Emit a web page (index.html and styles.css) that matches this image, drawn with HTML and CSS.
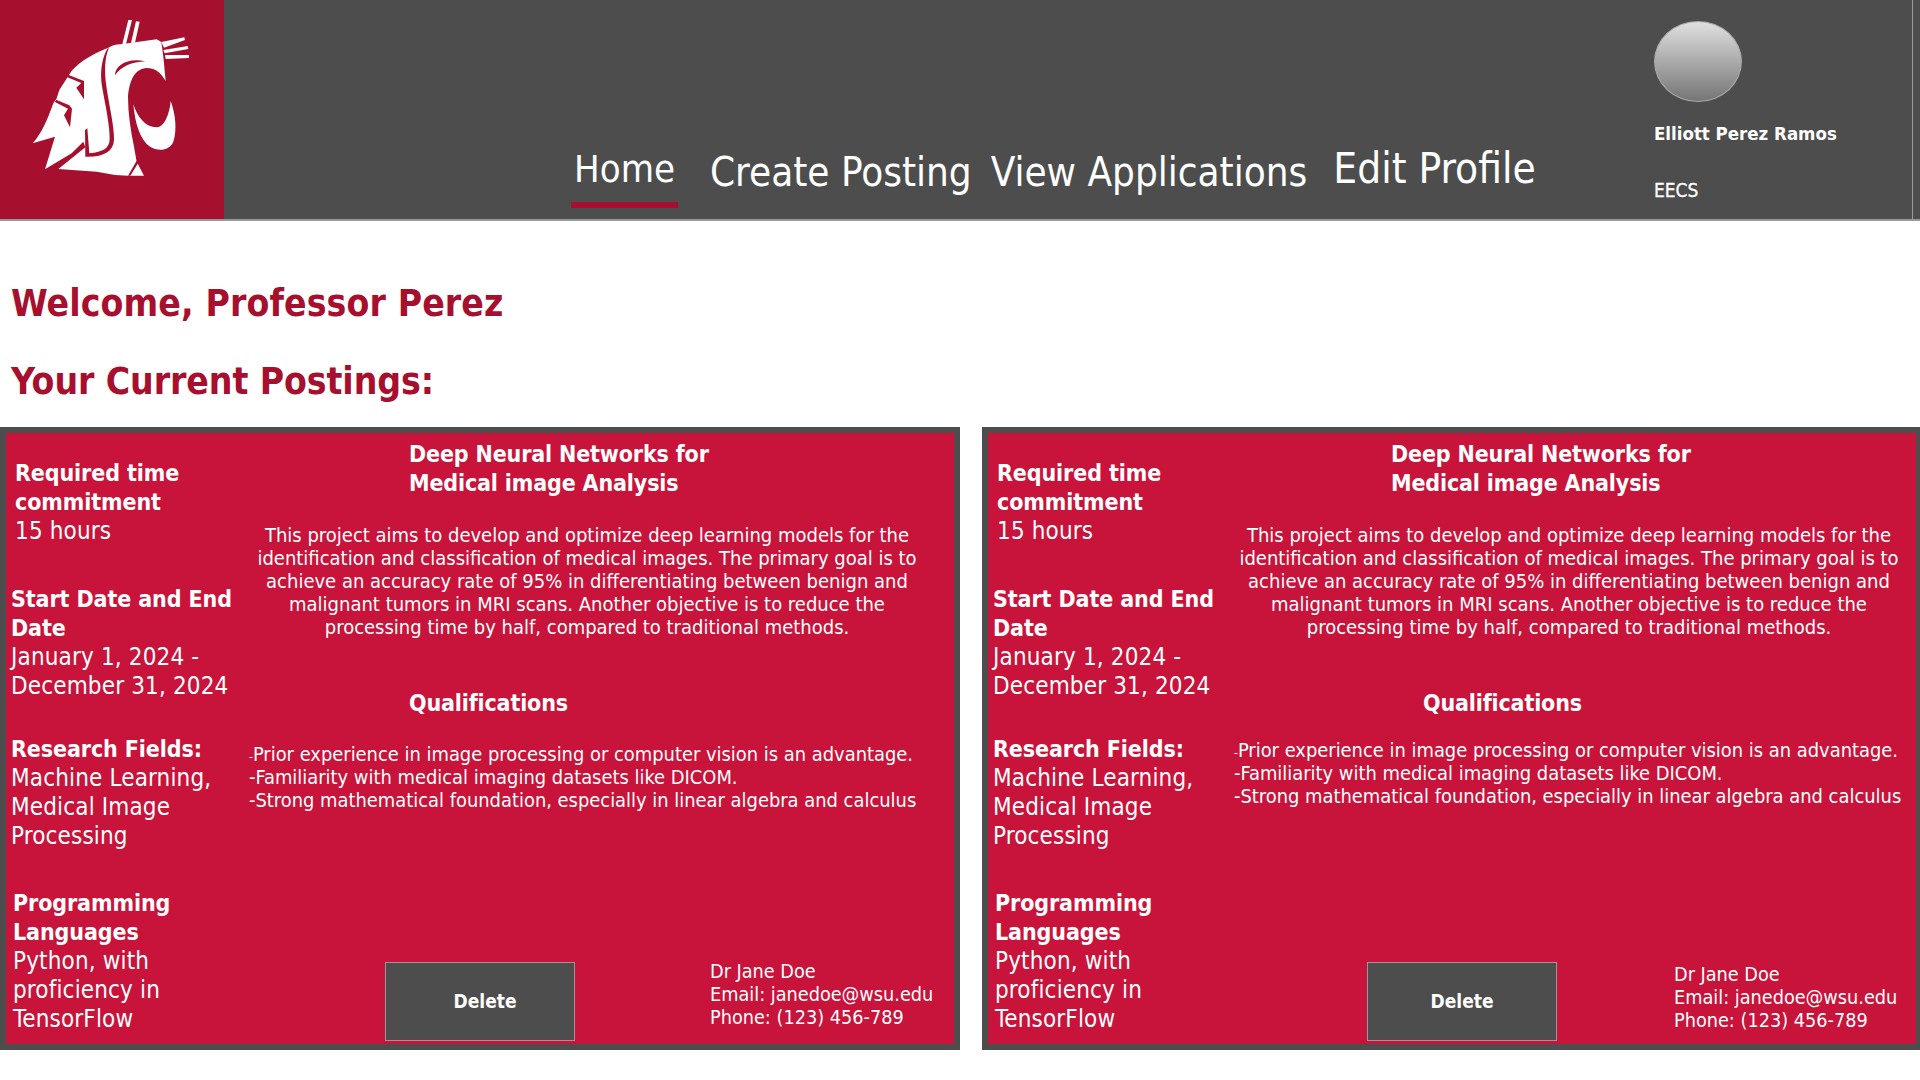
FILE: index.html
```html
<!DOCTYPE html>
<html lang="en">
<head>
<meta charset="utf-8">
<title>Faculty Home</title>
<link rel="stylesheet" href="styles.css">
</head>
<body>
<header class="topbar">
  <div class="logo">
    <svg class="logo-art" viewBox="0 0 672 657" aria-hidden="true">
      <g fill="#fff">
        <path d="M385 60L396 60L378 132L367 132Z"/>
        <path d="M408 64L419 65L405 128L393 128Z"/>
        <path d="M484 126L553 112L555 120L492 143Z"/>
        <path d="M490 150L563 138L565 147L494 160Z"/>
        <path d="M495 165L567 165L567 174L497 177Z"/>
        <path d="M400 313C412 350 435 382 470 382C492 382 508 345 512 303C526 340 532 390 520 425C508 452 475 455 450 440C420 420 405 370 400 313Z"/>
        <path d="M368 132L470 118L484 126L490 170L497 243C480 215 465 205 440 204C405 206 388 240 384 290C384 340 392 390 402 440L410 485L432 527L385 527L345 525L290 515L175 507L256 442L250 425L215 460L135 508L165 410L98 430C125 400 140 365 160 310L170 295L178 270L215 212C245 180 285 158 325 143C340 134 355 132 368 132Z"/>
      </g>
      <g fill="#a60f2d">
        <path d="M324 143C306 172 298 215 307 265C317 320 330 380 329 418C328 445 310 456 268 460L262 385L255 390L256 470C310 472 340 455 342 420C343 380 328 320 320 265C312 215 314 175 326 145Z"/>
        <path d="M204 224L252 243L252 298L229 263L244 249L202 232Z"/>
        <path d="M168 299L208 316L216 326L210 382L192 346L204 326L165 306Z"/>
        <path d="M345 226C345 195 385 172 436 184C395 186 365 198 345 226Z"/>
        <path d="M410 482L416 487L391 527L384 527Z"/>
      </g>
    </svg>
  </div>
  <nav class="nav">
    <a class="nav-item nav-home" href="#">Home</a>
    <a class="nav-item nav-create" href="#">Create Posting</a>
    <a class="nav-item nav-view" href="#">View Applications</a>
    <a class="nav-item nav-edit" href="#">Edit Profile</a>
  </nav>
  <div class="profile">
    <div class="avatar"></div>
    <p class="profile-name">Elliott Perez Ramos</p>
    <p class="profile-dept">EECS</p>
  </div>
  <div class="sliver"></div>
</header>

<main>
  <h1 class="welcome">Welcome, Professor Perez</h1>
  <h2 class="subtitle">Your Current Postings:</h2>
  <div class="cards">
    <article class="card card-a">
      <aside class="facts">
        <section class="fact fact-time"><strong>Required time<br>commitment</strong><br>15 hours</section>
        <section class="fact fact-date"><strong>Start Date and End<br>Date</strong><br>January 1, 2024 -<br>December 31, 2024</section>
        <section class="fact fact-field"><strong>Research Fields:</strong><br>Machine Learning,<br>Medical Image<br>Processing</section>
        <section class="fact fact-lang"><strong>Programming<br>Languages</strong><br>Python, with<br>proficiency in<br>TensorFlow</section>
      </aside>
      <div class="detail">
        <h3 class="title">Deep Neural Networks for<br>Medical image Analysis</h3>
        <p class="summary">This project aims to develop and optimize deep learning models for the<br>identification and classification of medical images. The primary goal is to<br>achieve an accuracy rate of 95% in differentiating between benign and<br>malignant tumors in MRI scans. Another objective is to reduce the<br>processing time by half, compared to traditional methods.</p>
        <h3 class="qual-title">Qualifications</h3>
        <p class="quals"><span class="tiny-dash">-</span>Prior experience in image processing or computer vision is an advantage.<br>-Familiarity with medical imaging datasets like DICOM.<br>-Strong mathematical foundation, especially in linear algebra and calculus</p>
        <div class="foot">
          <button class="delete" type="button">Delete</button>
          <p class="contact">Dr Jane Doe<br>Email: janedoe@wsu.edu<br>Phone: (123) 456-789</p>
        </div>
      </div>
    </article>
    <article class="card card-b">
      <aside class="facts">
        <section class="fact fact-time"><strong>Required time<br>commitment</strong><br>15 hours</section>
        <section class="fact fact-date"><strong>Start Date and End<br>Date</strong><br>January 1, 2024 -<br>December 31, 2024</section>
        <section class="fact fact-field"><strong>Research Fields:</strong><br>Machine Learning,<br>Medical Image<br>Processing</section>
        <section class="fact fact-lang"><strong>Programming<br>Languages</strong><br>Python, with<br>proficiency in<br>TensorFlow</section>
      </aside>
      <div class="detail">
        <h3 class="title">Deep Neural Networks for<br>Medical image Analysis</h3>
        <p class="summary">This project aims to develop and optimize deep learning models for the<br>identification and classification of medical images. The primary goal is to<br>achieve an accuracy rate of 95% in differentiating between benign and<br>malignant tumors in MRI scans. Another objective is to reduce the<br>processing time by half, compared to traditional methods.</p>
        <h3 class="qual-title">Qualifications</h3>
        <p class="quals"><span class="tiny-dash">-</span>Prior experience in image processing or computer vision is an advantage.<br>-Familiarity with medical imaging datasets like DICOM.<br>-Strong mathematical foundation, especially in linear algebra and calculus</p>
        <div class="foot">
          <button class="delete" type="button">Delete</button>
          <p class="contact">Dr Jane Doe<br>Email: janedoe@wsu.edu<br>Phone: (123) 456-789</p>
        </div>
      </div>
    </article>
  </div>
</main>
</body>
</html>
```
FILE: styles.css
```css
* { box-sizing: border-box; }
html, body { margin: 0; padding: 0; }
body {
  width: 1920px;
  height: 1080px;
  overflow: hidden;
  background: #fff;
  font-family: "DejaVu Sans Condensed", "DejaVu Sans", sans-serif;
  color: #fff;
}
p, h1, h2, h3 { margin: 0; }
strong { font-size: 23px; letter-spacing: -0.1px; }

.topbar {
  display: flex;
  height: 221px;
  background: #4d4d4d;
  border-bottom: 2px solid #999;
}
.logo { width: 224px; flex: none; background: #a60f2d; }
.logo-art { display: block; width: 224px; height: 219px; }

.nav { flex: none; width: 1396px; display: flex; align-items: flex-start; padding-top: 144px; }
.nav-item { color: #fff; text-decoration: none; font-size: 40px; line-height: 50px; white-space: nowrap; }
.nav-home { margin-left: 347px; padding: 0 3px 8px; border-bottom: 6px solid #a60f2d; height: 64px; font-size: 38px; }
.nav-create { margin-left: 32px; margin-top: 3px; }
.nav-view { margin-left: 19px; margin-top: 3px; }
.nav-edit { margin-left: 26px; font-size: 42px; }

.profile { flex: none; width: 292px; padding: 21px 0 0 34px; font-size: 19px; }
.avatar {
  width: 88px;
  height: 81px;
  border-radius: 50%;
  border: 1px solid #aaa;
  background: linear-gradient(#e0e0e0, #757575);
}
.profile-name { margin-top: 20px; line-height: 24px; white-space: nowrap; font-size: 18.5px; font-weight: 700; }
.profile-dept { margin-top: 32px; line-height: 24px; -webkit-text-stroke: 0.3px #fff; }
.sliver { flex: 1; border-left: 1px solid #999; }

.welcome, .subtitle {
  color: #a60f2d;
  font-size: 37px;
  line-height: 46px;
  font-weight: 700;
  padding-left: 11px;
  white-space: nowrap;
}
.welcome { margin-top: 60px; letter-spacing: 0.1px; }
.subtitle { margin-top: 32px; letter-spacing: -0.1px; }

.cards { display: flex; gap: 22px; margin-top: 22px; height: 623px; }
.card {
  display: flex;
  border: 6px solid #4d4d4d;
  background: #c8133a;
}
.card-a { width: 960px; flex: none; }
.card-b { flex: 1; }

.facts { flex: none; width: 234px; padding-top: 26px; font-size: 24px; line-height: 29px; white-space: nowrap; letter-spacing: 0.15px; }
.fact-time { margin-left: 9px; }
.fact-date { margin-left: 5px; margin-top: 39px; }
.fact-field { margin-left: 5px; margin-top: 34px; }
.fact-lang { margin-left: 7px; margin-top: 38px; }

.detail { flex: 1; display: flex; flex-direction: column; padding: 7px 0 3px; min-width: 0; }
.title, .qual-title { font-size: 23px; line-height: 29px; font-weight: 700; margin-left: 169px; white-space: nowrap; letter-spacing: -0.15px; }
.summary { margin-top: 26px; width: 694px; text-align: center; font-size: 20px; line-height: 23px; white-space: nowrap; }
.qual-title { margin-top: 50px; }
.quals { margin-top: 25px; margin-left: 9px; font-size: 19.9px; line-height: 23px; height: 69px; white-space: nowrap; }
.tiny-dash { font-size: 12px; line-height: 0; }
.card-b .qual-title { margin-left: 201px; }
.card-b .quals { margin-top: 21px; margin-left: 12px; }

.foot { margin-top: auto; display: flex; align-items: flex-start; padding-left: 145px; }
.delete {
  width: 190px;
  height: 79px;
  padding: 0 0 2px 10px;
  background: #4d4d4d;
  border: 1px solid #999;
  color: #fff;
  font: 700 19px "DejaVu Sans Condensed", "DejaVu Sans", sans-serif;
}
.card-b .delete { padding-left: 0; }
.contact { margin-top: -2px; margin-left: 135px; font-size: 19.7px; line-height: 23px; white-space: nowrap; }
.card-b .contact { margin-top: 1px; margin-left: 117px; }
```
